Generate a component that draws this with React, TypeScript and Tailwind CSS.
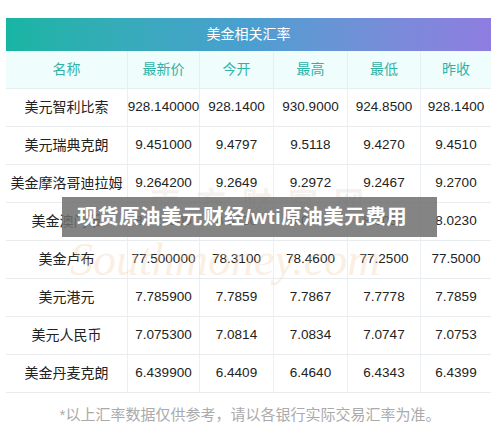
const cols = ["名称", "最新价", "今开", "最高", "最低", "昨收"];

const rows = [
  ["美元智利比索", "928.140000", "928.1400", "930.9000", "924.8500", "928.1400"],
  ["美元瑞典克朗", "9.451000", "9.4797", "9.5118", "9.4270", "9.4510"],
  ["美金摩洛哥迪拉姆", "9.264200", "9.2649", "9.2972", "9.2467", "9.2700"],
  ["美金澳门币", "8.023500", "8.0230", "8.0240", "8.0035", "8.0230"],
  ["美金卢布", "77.500000", "78.3100", "78.4600", "77.2500", "77.5000"],
  ["美元港元", "7.785900", "7.7859", "7.7867", "7.7778", "7.7859"],
  ["美元人民币", "7.075300", "7.0814", "7.0834", "7.0747", "7.0753"],
  ["美金丹麦克朗", "6.439900", "6.4409", "6.4640", "6.4343", "6.4399"],
];

const grid = "grid grid-cols-[122px_72px_74px_74px_73px_70px]";

export default function App() {
  return (
    <div
      className="relative w-[500px] h-[435px] bg-white overflow-hidden"
      style={{ fontFamily: '"Liberation Sans", "Noto Sans CJK SC", sans-serif' }}
    >
      <div className="pt-[18px] pl-[6px]">
        <div className="w-[485px]">
          {/* title bar */}
          <div className="h-[33px] flex items-center justify-center bg-gradient-to-r from-[#17b5a3] via-[#4a9fd0] to-[#8e7de0] text-white text-[14px]">
            美金相关汇率
          </div>

          {/* column header */}
          <div className={`${grid} h-[38px] bg-[#effdfc] border-b border-[#e6eef0]`}>
            {cols.map((c, i) => (
              <div
                key={c}
                className={`flex items-center justify-center text-[14px] text-[#2fb3a8] ${i < 5 ? "border-r border-[#e3f1f2]" : ""}`}
              >
                {c}
              </div>
            ))}
          </div>

          {/* rows */}
          {rows.map((r) => (
            <div key={r[0]} className={`${grid} h-[38px] border-b border-[#e8ecef]`}>
              {r.map((v, i) => (
                <div
                  key={i}
                  className={`flex items-center justify-center text-[#222] whitespace-nowrap ${i === 0 ? "text-[14px]" : "text-[13.5px]"} ${i < 5 ? "border-r border-[#eceff2]" : ""}`}
                >
                  {v}
                </div>
              ))}
            </div>
          ))}
        </div>

        <p className="mt-[11px] pr-[6px] text-center text-[15px] text-[#aaaaaa]">
          *以上汇率数据仅供参考，请以各银行实际交易汇率为准。
        </p>
      </div>

      {/* watermark */}
      <div className="absolute left-[150px] top-[180px] text-[30px] font-bold tracking-[16px] text-[#d8d0c8]/30 pointer-events-none">
        南方财富网
      </div>
      <div
        className="absolute left-[70px] top-[225px] text-[46px] italic text-[#f0c89a]/30 pointer-events-none"
        style={{ fontFamily: '"Liberation Serif", serif' }}
      >
        Southmoney.com
      </div>

      {/* overlay banner */}
      <div className="absolute left-[62px] top-[197px] w-[375px] h-[40px] bg-[#6e6e6e]/85 flex items-center pl-[15px]">
        <span className="text-white text-[20.5px] font-bold tracking-[0.5px]">现货原油美元财经/wti原油美元费用</span>
      </div>
    </div>
  );
}
